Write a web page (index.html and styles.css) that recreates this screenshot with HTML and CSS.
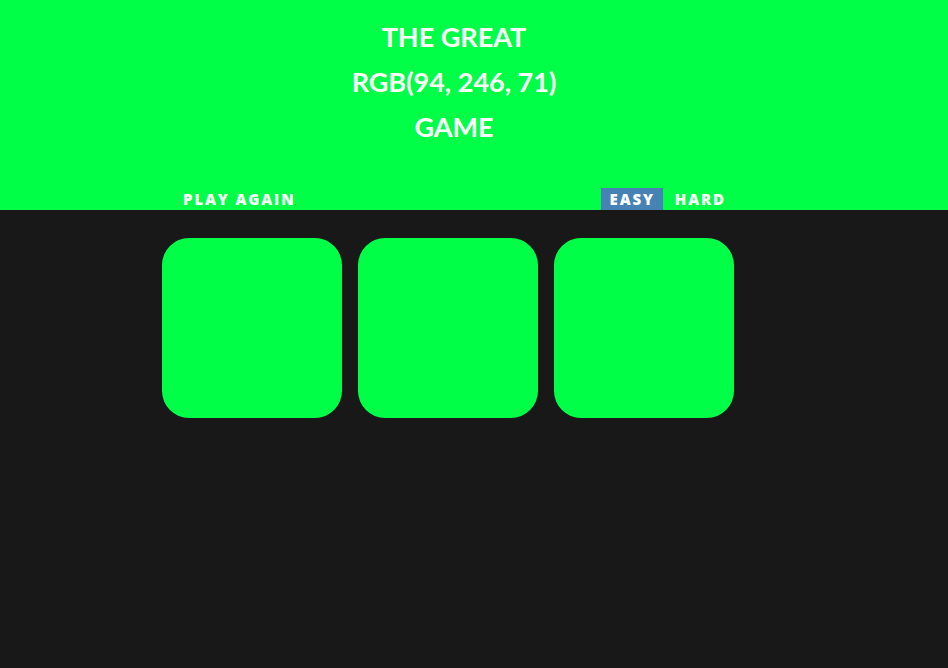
FILE: index.html
```html
<!DOCTYPE html>
<html>
<head>
<meta charset="utf-8">
<link rel="stylesheet" href="styles.css">
</head>
<body>
<header class="header">
  <h1 class="title">
    <span class="title-line">THE GREAT</span>
    <span class="title-line">RGB(94, 246, 71)</span>
    <span class="title-line">GAME</span>
  </h1>
  <nav class="nav">
    <button class="btn">PLAY AGAIN</button>
    <div class="modes">
      <button class="btn selected">EASY</button>
      <button class="btn">HARD</button>
    </div>
  </nav>
</header>
<main class="board">
  <div class="square"></div>
  <div class="square"></div>
  <div class="square"></div>
</main>
</body>
</html>
```

FILE: styles.css
```css
* { box-sizing: border-box; }
html, body { margin: 0; padding: 0; }
body {
  background: #181818;
  font-family: "Lato", "Open Sans", sans-serif;
  height: 668px;
  padding-right: 40px;
}
.header {
  background: #00ff47;
  height: 210px;
  margin-right: -40px;
  padding-right: 40px;
  display: flex;
  flex-direction: column;
  padding-top: 14px;
}
.title {
  margin: 0;
  color: #fff;
  font-weight: 700;
  font-size: 27px;
  text-align: center;
  display: flex;
  flex-direction: column;
}
.title-line { line-height: 45px; }
.nav {
  width: 600px;
  margin: auto auto 0;
  padding: 0 21px;
  height: 23px;
  display: flex;
  justify-content: space-between;
  align-items: stretch;
}
.modes { display: flex; gap: 4px; }
.btn {
  border: none;
  background: none;
  color: #fff;
  font-family: "Open Sans", sans-serif;
  font-weight: 800;
  font-size: 15px;
  letter-spacing: 1.9px;
  padding: 0 7px 1px 8px;
  height: 22px;
  line-height: 20px;
  margin-top: 1px;
  cursor: pointer;
}
.btn.selected { background: #4682b4; padding: 0 8px 1px 9px; }
.board {
  width: 600px;
  margin: 20px auto 0;
  display: flex;
  padding: 8px 0;
}
.square {
  width: 180px;
  height: 180px;
  margin: 0 8px;
  background: #00ff47;
  border-radius: 27px;
}
```
